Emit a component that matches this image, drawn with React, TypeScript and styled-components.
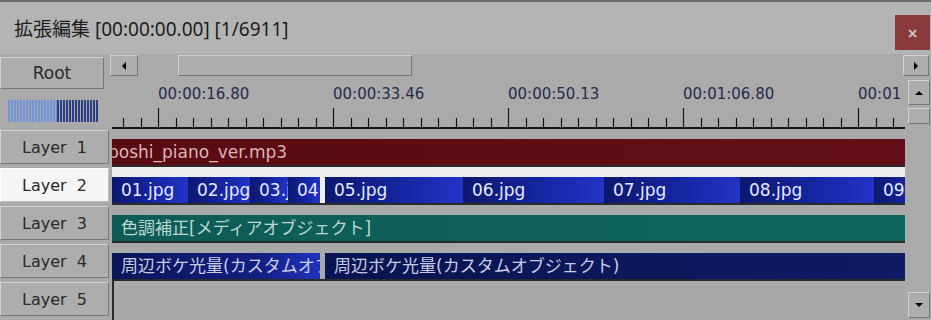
import React from "react";
import styled, { createGlobalStyle, css } from "styled-components";

const GlobalStyle = createGlobalStyle`
  html, body {
    margin: 0;
    padding: 0;
    background: #aaaaaa;
    overflow: hidden;
  }
`;

// checker dither used on scroll tracks
const dither = css`
  background-color: #aaaaaa;
  background-image: repeating-conic-gradient(#a4a4a4 0 25%, #b0b0b0 0 50%);
  background-size: 2px 2px;
`;

// classic raised button face
const raised = css`
  box-sizing: border-box;
  background: #adadad;
  border-top: 1px solid #d2d2d2;
  border-left: 1px solid #d2d2d2;
  border-right: 1px solid #767676;
  border-bottom: 1px solid #767676;
`;

const UI_FONT = `"DejaVu Sans", "Noto Sans CJK JP", sans-serif`;

const Window = styled.div`
  width: 931px;
  height: 320px;
  display: flex;
  flex-direction: column;
  overflow: hidden;
  background: #aaaaaa;
  font-family: ${UI_FONT};
`;

const TitleBar = styled.div`
  height: 52px;
  flex: none;
  border-top: 2px solid #6b6b6b;
  background: #b4b4b4;
  display: flex;
  align-items: flex-start;
  justify-content: space-between;
`;

const Title = styled.div`
  margin: 14px 0 0 14px;
  font-family: "Noto Sans", "Noto Sans CJK JP", sans-serif;
  font-size: 19px;
  line-height: 26px;
  color: #1c1c1c;
`;

const CloseButton = styled.div`
  width: 35px;
  height: 35px;
  margin: 13px 1px 0 0;
  background: #8b3a3a;
  color: #c9c9c9;
  font-family: "DejaVu Sans", sans-serif;
  font-size: 14px;
  font-weight: bold;
  display: flex;
  align-items: center;
  justify-content: center;
`;

const Body = styled.div`
  flex: 1;
  display: flex;
  min-height: 0;
  ${dither};
`;

const LeftColumn = styled.div`
  width: 110px;
  flex: none;
  display: flex;
  flex-direction: column;
  background: #aaaaaa;
`;

const RootButton = styled.div`
  ${raised};
  width: 104px;
  height: 32px;
  margin-top: 3px;
  display: flex;
  align-items: center;
  justify-content: center;
  font-size: 17px;
  color: #2a2a2a;
`;

const ZoomGauge = styled.div`
  width: 90px;
  height: 22px;
  margin: 11px 0 8px 8px;
  background:
    repeating-linear-gradient(90deg, #2c3f86 0 2px, transparent 2px 3px) 49px 0 / 41px 100% no-repeat,
    repeating-linear-gradient(90deg, #6f94da 0 2px, transparent 2px 3px) 0 0 / 49px 100% no-repeat;
`;

const LayerButton = styled.div<{ $active?: boolean }>`
  ${raised};
  width: 109px;
  height: 34px;
  margin-bottom: 4px;
  display: flex;
  align-items: center;
  justify-content: center;
  font-size: 16px;
  word-spacing: 5px;
  color: #2a2a2a;
  ${({ $active }) =>
    $active &&
    css`
      background: #f5f5f5;
      border-color: #ffffff #bdbdbd #bdbdbd #ffffff;
    `}
`;

const MainColumn = styled.div`
  flex: 1;
  min-width: 0;
  display: flex;
  flex-direction: column;
`;

const HScroll = styled.div`
  height: 21px;
  margin-top: 1px;
  display: flex;
`;

const ArrowButton = styled.div<{ $w?: number; $h?: number }>`
  ${raised};
  width: ${({ $w }) => $w ?? 22}px;
  height: ${({ $h }) => $h ?? 21}px;
  flex: none;
  display: flex;
  align-items: center;
  justify-content: center;
`;

const Track = styled.div`
  flex: 1;
  display: flex;
  ${dither};
`;

const Thumb = styled.div`
  ${raised};
  width: 234px;
  height: 21px;
  margin-left: 40px;
`;

const Ruler = styled.svg`
  display: block;
  flex: none;
  background: #aaaaaa;
`;

const Rows = styled.div`
  flex: 1;
  display: flex;
  flex-direction: column;
  margin-left: 2px;
  background: #aaaaaa;
`;

const Row = styled.div<{ $selected?: boolean }>`
  height: 38px;
  flex: none;
  box-sizing: border-box;
  padding-top: 10px;
  border-bottom: 2px solid #2a2a2a;
  display: flex;
  overflow: hidden;
  background: ${({ $selected }) => ($selected ? "#eeeeee" : "#a9a9a9")};
`;

const EmptyRow = styled.div`
  flex: 1;
  border-left: 2px solid #2a2a2a;
  background: #a9a9a9;
`;

const Clip = styled.div<{ $bg: string; $fg: string; $w?: number; $gap?: number }>`
  height: 26px;
  flex: ${({ $w }) => ($w ? "none" : "1 0 auto")};
  width: ${({ $w }) => ($w ? `${$w}px` : "auto")};
  margin-left: ${({ $gap }) => $gap ?? 0}px;
  box-sizing: border-box;
  padding-left: 9px;
  background: ${({ $bg }) => $bg};
  color: ${({ $fg }) => $fg};
  font-size: 17px;
  line-height: 26px;
  white-space: nowrap;
  overflow: hidden;
`;

const VScroll = styled.div`
  width: 26px;
  flex: none;
  display: flex;
  flex-direction: column;
  align-items: flex-start;
  ${dither};
`;

const VButton = styled(ArrowButton)<{ $top?: number; $bottom?: number }>`
  margin-left: 3px;
  margin-top: ${({ $top }) => $top ?? 0}px;
  margin-bottom: ${({ $bottom }) => $bottom ?? 0}px;
`;

const HRightButton = styled(ArrowButton)`
  margin-top: 1px;
  margin-left: -2px;
`;

const VThumb = styled.div`
  ${raised};
  width: 22px;
  height: 16px;
  margin: 3px 0 0 3px;
`;

const Spacer = styled.div`
  flex: 1;
`;

const Tri = ({ dir }: { dir: "left" | "right" | "up" | "down" }) => {
  const horizontal = dir === "left" || dir === "right";
  const pts = {
    left: "5,0 5,8 1,4",
    right: "1,0 1,8 5,4",
    up: "0,6 8,6 4,2",
    down: "0,2 8,2 4,6",
  }[dir];
  return (
    <svg width={horizontal ? 6 : 8} height={8} viewBox={horizontal ? "0 0 6 8" : "0 0 8 8"}>
      <polygon points={pts} fill="#000" />
    </svg>
  );
};

const RULER_W = 795;
const RULER_H = 53;
const labels = ["00:00:16.80", "00:00:33.46", "00:00:50.13", "00:01:06.80", "00:01:23.46"];

const TimeRuler = () => {
  const ticks: { x: number; major: boolean }[] = [];
  for (let i = 0; 13 + 17.5 * i < 786; i++) {
    ticks.push({ x: Math.round(13 + 17.5 * i) + 0.5, major: (i - 2) % 10 === 0 });
  }
  return (
    <Ruler width={RULER_W} height={RULER_H}>
      <defs>
        <clipPath id="rulerClip">
          <rect x="0" y="0" width="793" height={RULER_H} />
        </clipPath>
      </defs>
      <g clipPath="url(#rulerClip)">
        {labels.map((t, k) => (
          <text
            key={t}
            x={48 + 175 * k}
            y={23}
            fontFamily='"DejaVu Sans", sans-serif'
            fontSize={15}
            fill="#262a4c"
          >
            {t}
          </text>
        ))}
      </g>
      {ticks.map((t, i) => (
        <line key={i} x1={t.x} x2={t.x} y1={t.major ? 32 : 42} y2={52} stroke="#141414" strokeWidth={1.2} />
      ))}
      <rect x={2} y={51} width={RULER_W - 2} height={2} fill="#141414" />
    </Ruler>
  );
};

const imgBg = "linear-gradient(90deg, #0c186e 0%, #1627a6 60%, #2233c6 100%)";
const imageClips = [
  { name: "01.jpg", w: 76 },
  { name: "02.jpg", w: 62 },
  { name: "03.jpg", w: 38 },
  { name: "04.jpg", w: 32 },
  { name: "05.jpg", w: 138, gap: 5 },
  { name: "06.jpg", w: 141 },
  { name: "07.jpg", w: 136 },
  { name: "08.jpg", w: 134 },
  { name: "09.jpg", w: 60 },
];

export default function App() {
  return (
    <Window>
      <GlobalStyle />
      <TitleBar>
        <Title>拡張編集 [00:00:00.00] [1/6911]</Title>
        <CloseButton>×</CloseButton>
      </TitleBar>
      <Body>
        <LeftColumn>
          <RootButton>Root</RootButton>
          <ZoomGauge />
          {[1, 2, 3, 4, 5].map((n) => (
            <LayerButton key={n} $active={n === 2}>
              Layer {n}
            </LayerButton>
          ))}
        </LeftColumn>
        <MainColumn>
          <HScroll>
            <ArrowButton $w={28}>
              <Tri dir="left" />
            </ArrowButton>
            <Track>
              <Thumb />
            </Track>
          </HScroll>
          <TimeRuler />
          <Rows>
            <Row>
              <Clip $bg="linear-gradient(90deg, #590a12, #640f18)" $fg="#d9b6b6" $gap={-13}>
                boshi_piano_ver.mp3
              </Clip>
            </Row>
            <Row $selected>
              {imageClips.map((c) => (
                <Clip key={c.name} $bg={imgBg} $fg="#e6eaff" $w={c.w} $gap={c.gap}>
                  {c.name}
                </Clip>
              ))}
            </Row>
            <Row>
              <Clip $bg="linear-gradient(90deg, #0d5b56, #0f6660)" $fg="#bcd8d0">
                色調補正[メディアオブジェクト]
              </Clip>
            </Row>
            <Row>
              <Clip $bg="linear-gradient(90deg, #0b1558 0%, #111f80 70%, #2232bc 100%)" $fg="#c9cde4" $w={208}>
                周辺ボケ光量(カスタムオブジェクト)
              </Clip>
              <Clip $bg="linear-gradient(90deg, #0b1452, #0f1a64)" $fg="#c9cde4" $gap={5}>
                周辺ボケ光量(カスタムオブジェクト)
              </Clip>
            </Row>
            <EmptyRow />
          </Rows>
        </MainColumn>
        <VScroll>
          <HRightButton $w={26}>
            <Tri dir="right" />
          </HRightButton>
          <VButton $w={22} $h={25} $top={4}>
            <Tri dir="up" />
          </VButton>
          <VThumb />
          <Spacer />
          <VButton $w={22} $h={26} $bottom={2}>
            <Tri dir="down" />
          </VButton>
        </VScroll>
      </Body>
    </Window>
  );
}
